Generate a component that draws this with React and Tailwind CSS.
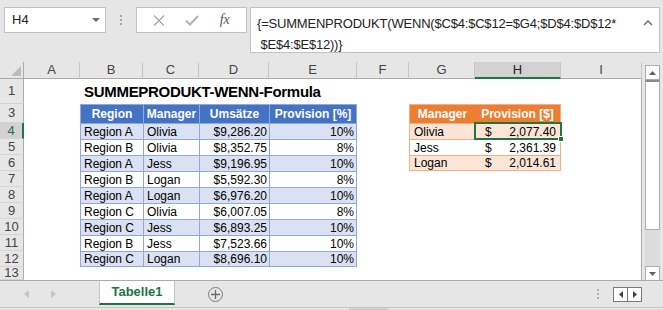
import React from "react";

const blue = [
  ["Region A", "Olivia", "$9,286.20", "10%"],
  ["Region B", "Olivia", "$8,352.75", "8%"],
  ["Region A", "Jess", "$9,196.95", "10%"],
  ["Region B", "Logan", "$5,592.30", "8%"],
  ["Region A", "Logan", "$6,976.20", "10%"],
  ["Region C", "Olivia", "$6,007.05", "8%"],
  ["Region C", "Jess", "$6,893.25", "10%"],
  ["Region B", "Jess", "$7,523.66", "10%"],
  ["Region C", "Logan", "$8,696.10", "10%"],
];
const orange = [
  ["Olivia", "2,077.40"],
  ["Jess", "2,361.39"],
  ["Logan", "2,014.61"],
];

const rows = ["1", "3", "4", "5", "6", "7", "8", "9", "10", "11", "12", "13"];
const letters = ["A", "B", "C", "D", "E", "F", "G", "H", "I"];

function RowHead({ n }) {
  const sel = n === "4";
  return (
    <div
      className={
        "flex items-center justify-center border-b border-[#d4d4d4] text-[13px] text-[#444] " +
        (sel ? "bg-[#d2d2d2] border-r-2 border-r-[#217346] text-[#217346]" : "bg-[#e6e6e6] border-r border-r-[#ababab]")
      }
    >
      {n}
    </div>
  );
}

function Empty({ last }) {
  return <div className={last ? "bg-white border-r border-[#ababab]" : "bg-white"} />;
}

function BlueHead({ children, last }) {
  return (
    <div
      className={
        "flex items-center justify-center bg-[#4472c4] text-white font-bold text-[12px] border-l border-t border-[#8ea9db] whitespace-nowrap " +
        (last ? "border-r" : "")
      }
    >
      {children}
    </div>
  );
}

function BlueCell({ children, even, right, last, bottom }) {
  return (
    <div
      className={
        "flex items-center border-l border-t border-[#8ea9db] text-[12px] text-black whitespace-nowrap " +
        (even ? "bg-[#d9e1f2] " : "bg-white ") +
        (right ? "justify-end pr-[2px] " : "justify-start pl-[3px] ") +
        (last ? "border-r " : "") +
        (bottom ? "border-b" : "")
      }
    >
      {children}
    </div>
  );
}

function OrangeHead({ children, first }) {
  return (
    <div
      className={
        "flex items-center justify-center bg-[#ed7d31] text-white font-bold text-[12px] border-t border-[#f4b084] whitespace-nowrap " +
        (first ? "border-l" : "border-r")
      }
    >
      {children}
    </div>
  );
}

function OrangeName({ children, even, bottom }) {
  return (
    <div
      className={
        "flex items-center pl-[4px] border-l border-t border-[#f4b084] text-[12px] text-black " +
        (even ? "bg-[#fce4d6] " : "bg-white ") +
        (bottom ? "border-b" : "")
      }
    >
      {children}
    </div>
  );
}

function OrangeVal({ children, even, bottom }) {
  return (
    <div
      className={
        "flex items-center justify-between pl-[10px] pr-[4px] border-r border-t border-[#f4b084] text-[12px] text-black " +
        (even ? "bg-[#fce4d6] " : "bg-white ") +
        (bottom ? "border-b" : "")
      }
    >
      <span>$</span>
      <span>{children}</span>
    </div>
  );
}

function SheetRow({ n }) {
  const cells = [<RowHead key="h" n={n} />, <Empty key="a" />];
  const bi = Number(n) - 4;
  if (n === "1") {
    cells.push(
      <div key="t" className="col-span-5 flex items-center pl-[4px] pt-[1px] bg-white text-[15px] font-bold tracking-[-0.3px] text-black whitespace-nowrap">
        SUMMEPRODUKT-WENN-Formula
      </div>
    );
  } else if (n === "3") {
    cells.push(
      <BlueHead key="b">Region</BlueHead>,
      <BlueHead key="c">Manager</BlueHead>,
      <BlueHead key="d">Umsätze</BlueHead>,
      <BlueHead key="e" last>Provision [%]</BlueHead>,
      <Empty key="f" />
    );
  } else if (bi >= 0 && bi < 9) {
    const r = blue[bi];
    const even = bi % 2 === 0;
    const bottom = bi === 8;
    cells.push(
      <BlueCell key="b" even={even} bottom={bottom}>{r[0]}</BlueCell>,
      <BlueCell key="c" even={even} bottom={bottom}>{r[1]}</BlueCell>,
      <BlueCell key="d" even={even} bottom={bottom} right>{r[2]}</BlueCell>,
      <BlueCell key="e" even={even} bottom={bottom} right last>{r[3]}</BlueCell>,
      <Empty key="f" />
    );
  } else {
    cells.push(<Empty key="b" />, <Empty key="c" />, <Empty key="d" />, <Empty key="e" />, <Empty key="f" />);
  }
  if (n === "3") {
    cells.push(
      <OrangeHead key="g" first>Manager</OrangeHead>,
      <OrangeHead key="hh">Provision [$]</OrangeHead>
    );
  } else if (bi >= 0 && bi < 3) {
    const o = orange[bi];
    const even = bi % 2 === 0;
    cells.push(
      <OrangeName key="g" even={even} bottom={bi === 2}>{o[0]}</OrangeName>,
      <OrangeVal key="hh" even={even} bottom={bi === 2}>{o[1]}</OrangeVal>
    );
  } else {
    cells.push(<Empty key="g" />, <Empty key="hh" />);
  }
  cells.push(<Empty key="i" last />);
  return cells;
}

export default function App() {
  return (
    <div className="w-[663px] h-[310px] bg-[#e6e6e6] overflow-hidden flex flex-col font-['Liberation_Sans',Arial,sans-serif] text-black">
      {/* formula bar */}
      <div className="h-[62px] flex items-start pt-[7px] pl-[4px] shrink-0">
        <div className="w-[102px] h-[26px] bg-white border border-[#c2c2c2] flex items-center justify-between pl-[7px] pr-[5px] text-[13px] text-[#222]">
          <span>H4</span>
          <svg width="8" height="5" viewBox="0 0 8 5">
            <path d="M0 0 L8 0 L4 4 Z" fill="#6b6b6b" />
          </svg>
        </div>
        <div className="w-[30px] h-[26px] flex flex-col items-center justify-center gap-[2px]">
          <div className="w-[2px] h-[2px] bg-[#a6a6a6]" />
          <div className="w-[2px] h-[2px] bg-[#a6a6a6]" />
          <div className="w-[2px] h-[2px] bg-[#a6a6a6]" />
        </div>
        <div className="w-[111px] h-[26px] bg-white border border-[#c2c2c2] flex items-center justify-around px-[6px]">
          <svg width="12" height="11" viewBox="0 0 12 11">
            <path d="M1 0.5 L11 10.5 M11 0.5 L1 10.5" stroke="#a6a6a6" strokeWidth="1.3" fill="none" />
          </svg>
          <svg width="14" height="11" viewBox="0 0 14 11">
            <path d="M1 5.5 L5 9.5 L13 1" stroke="#b4b4b4" strokeWidth="2" fill="none" />
          </svg>
          <span className="font-['Liberation_Serif',serif] italic text-[14px] text-[#555] leading-none">fx</span>
        </div>
        <div className="ml-[3px] w-[410px] h-[46px] bg-white border border-[#c2c2c2] flex justify-between pl-[6px] pr-[6px] pt-[5px]">
          <div className="text-[13px] leading-[21px] text-[#222] tracking-[-0.2px] whitespace-pre">
            {"{=SUMMENPRODUKT(WENN($C$4:$C$12=$G4;$D$4:$D$12*\n $E$4:$E$12))}"}
          </div>
          <svg width="10" height="6" viewBox="0 0 10 6" className="mt-[7px]">
            <path d="M1 5 L5 1 L9 5" stroke="#777" strokeWidth="1.6" fill="none" />
          </svg>
        </div>
      </div>

      {/* sheet + vertical scrollbar */}
      <div className="h-[218px] flex shrink-0">
        <div className="relative grid grid-cols-[24px_56px_63px_56px_70px_88px_52px_66px_86px_81px] grid-rows-[17px_25px_19px_16px_16px_16px_16px_16px_16px_16px_16px_16px_13px] w-[642px]">
          {/* header row */}
          <div className="relative bg-[#e6e6e6] border-r border-b border-[#ababab]">
            <svg width="10" height="10" viewBox="0 0 10 10" className="absolute right-[2px] bottom-[2px]">
              <path d="M10 0 L10 10 L0 10 Z" fill="#bcbcbc" />
            </svg>
          </div>
          {letters.map((l) =>
            l === "H" ? (
              <div key={l} className="flex items-center justify-center bg-[#d2d2d2] border-r border-r-[#c6c6c6] border-b-2 border-b-[#217346] text-[13px] text-[#222]">
                {l}
              </div>
            ) : (
              <div key={l} className="flex items-center justify-center bg-[#e6e6e6] border-r border-r-[#c6c6c6] border-b border-b-[#ababab] text-[13px] text-[#444]">
                {l}
              </div>
            )
          )}
          {rows.map((n) => (
            <SheetRow key={n} n={n} />
          ))}
          {/* selection */}
          <div className="absolute left-[474px] top-[60px] w-[88px] h-[18px] border-2 border-[#217346]" />
          <div className="absolute left-[558px] top-[74px] w-[6px] h-[6px] bg-[#217346] border border-white" />
        </div>
        <div className="ml-[3px] mt-[3px] w-[15px] h-[216px] flex flex-col bg-[#dcdcdc]">
          <div className="h-[15px] bg-white border border-[#ababab] flex items-center justify-center">
            <svg width="7" height="4" viewBox="0 0 7 4">
              <path d="M0 4 L7 4 L3.5 0 Z" fill="#606060" />
            </svg>
          </div>
          <div className="h-[150px] bg-white border-x border-b border-[#ababab] border-t-2 border-t-[#8a8a8a]" />
          <div className="flex-1" />
          <div className="h-[15px] bg-white border border-[#ababab] flex items-center justify-center">
            <svg width="7" height="4" viewBox="0 0 7 4">
              <path d="M0 0 L7 0 L3.5 4 Z" fill="#606060" />
            </svg>
          </div>
        </div>
      </div>

      {/* tab bar */}
      <div className="h-[27px] flex items-stretch border-t border-[#ababab] shrink-0">
        <div className="w-[99px] flex items-center pl-[24px] gap-[22px]">
          <svg width="5" height="8" viewBox="0 0 5 8">
            <path d="M5 0 L5 8 L0 4 Z" fill="#c4c4c4" />
          </svg>
          <svg width="5" height="8" viewBox="0 0 5 8">
            <path d="M0 0 L0 8 L5 4 Z" fill="#c4c4c4" />
          </svg>
        </div>
        <div className="w-[76px] h-[24px] bg-white border-x border-[#c6c6c6] border-b-2 border-b-[#217346] flex items-center justify-center text-[13px] font-bold text-[#217346]">
          Tabelle1
        </div>
        <div className="ml-[33px] flex items-center">
          <div className="w-[15px] h-[15px] rounded-full border border-[#7a7a7a] flex items-center justify-center">
            <svg width="9" height="9" viewBox="0 0 9 9">
              <path d="M4.5 0 L4.5 9 M0 4.5 L9 4.5" stroke="#6a6a6a" strokeWidth="1.3" />
            </svg>
          </div>
        </div>
        <div className="flex-1" />
        <div className="flex flex-col justify-center gap-[2px] mr-[14px]">
          <div className="w-[2px] h-[2px] bg-[#b0b0b0]" />
          <div className="w-[2px] h-[2px] bg-[#b0b0b0]" />
          <div className="w-[2px] h-[2px] bg-[#b0b0b0]" />
        </div>
        <div className="flex items-center mr-[21px]">
          <div className="w-[29px] h-[15px] border border-[#7a7a7a] bg-white flex">
            <div className="flex-1 flex items-center justify-center border-r border-[#7a7a7a]">
              <svg width="4" height="7" viewBox="0 0 4 7">
                <path d="M4 0 L4 7 L0 3.5 Z" fill="#404040" />
              </svg>
            </div>
            <div className="flex-1 flex items-center justify-center">
              <svg width="4" height="7" viewBox="0 0 4 7">
                <path d="M0 0 L0 7 L4 3.5 Z" fill="#404040" />
              </svg>
            </div>
          </div>
        </div>
      </div>
      <div className="flex-1 border-t border-[#c6c6c6] bg-[#e6e6e6] relative">
        <div className="absolute left-[349px] top-0 w-[39px] h-full bg-[#d0d0d0]" />
      </div>
    </div>
  );
}
